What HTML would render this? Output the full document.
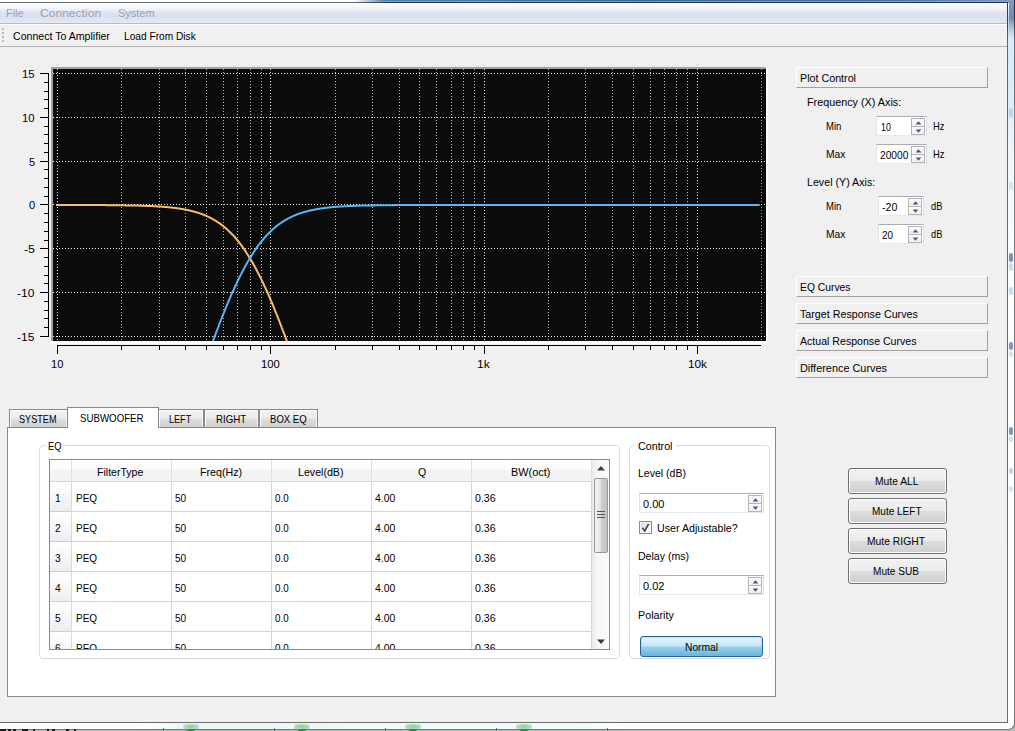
<!DOCTYPE html>
<html lang="en"><head><meta charset="utf-8"><title>EQ Control</title>
<style>
html,body{margin:0;padding:0}
body{width:1015px;height:731px;position:relative;overflow:hidden;background:#f0f0f0;font-family:"Liberation Sans", sans-serif;font-size:11px;color:#000}
.abs{position:absolute}
div{box-sizing:border-box}
.t{position:absolute;white-space:pre;transform-origin:0 0}
.hdr{position:absolute;left:796px;width:192px;height:21px;border-top:1px solid #fff;border-left:1px solid #fff;border-right:1px solid #a0a0a0;border-bottom:1px solid #a0a0a0;background:#f0f0f0}
.spin{position:absolute;background:#fff;border:1px solid #e3e9ef;border-top-color:#abadb3;border-left-color:#e2e3ea;border-right-color:#dbdfe6}
.sb{position:absolute;width:14px;border:1px solid #b4b4b4;background:linear-gradient(#fdfdfd,#f1f1f5)}
.tab{position:absolute;top:409px;height:18px;border:1px solid #8a8a8c;border-bottom:none;box-shadow:inset 1px 1px 0 #fbfbfb,inset -1px 0 0 #f4f4f4;background:linear-gradient(#f2f2f2 0%,#ececec 45%,#dedede 55%,#d0d0d0 100%)}
.gb{position:absolute;border:1px solid #d9dde1;border-radius:4px}
.btn{position:absolute;left:848px;width:99px;height:26px;border:1px solid #707070;border-radius:3px;box-shadow:inset 0 0 0 1px #fcfcfc;background:linear-gradient(#f2f2f2 0%,#ebebeb 48%,#dddddd 52%,#cfcfcf 100%)}
</style></head>
<body>
<div class="abs" style="left:0;top:0;width:1015px;height:1px;background:linear-gradient(90deg,#fff 0,#fff 355px,#4f7fb5 385px,#3a659a 640px,#4a73a3 900px,#7c9cc3 1015px)"></div>
<div class="abs" style="left:0;top:1px;width:1015px;height:1px;background:linear-gradient(90deg,#fff 0,#fff 352px,#79a6d4 380px,#6e9bca 640px,#7ba0ca 900px,#86a5ca 1015px)"></div>
<div class="abs" style="left:0;top:2px;width:1008px;height:1px;background:linear-gradient(90deg,#6a6a6a 0,#6a6a6a 355px,#1f3552 390px,#1f3552 100%)"></div>
<div class="abs" style="left:0;top:3px;width:1007px;height:20px;background:linear-gradient(#ffffff 0%,#f4f5fa 25%,#dfe2f0 50%,#dcdfee 70%,#e6e8f3 100%)"></div>
<div class="abs" style="left:0;top:23px;width:1007px;height:1px;background:#b8bbc6"></div>
<div class="abs" style="left:0;top:24px;width:1007px;height:1px;background:#fdfdfd"></div>
<div class="abs" style="left:0;top:25px;width:1007px;height:21px;background:#f1f1f1"></div>
<div class="abs" style="left:0;top:46px;width:1007px;height:1px;background:#b2b2b2"></div>
<div class="abs" style="left:2px;top:28px;width:2px;height:16px;background:repeating-linear-gradient(#b8b8b8 0,#b8b8b8 2px,transparent 2px,transparent 4px)"></div>
<div class="abs" style="left:1007px;top:2px;width:1px;height:721px;background:linear-gradient(#25364d 0,#3a4656 22px,#666 40px,#6b6b6b 100%)"></div>
<div class="abs" style="left:1008px;top:0;width:6px;height:730px;background:linear-gradient(#7d9cc2 0,#6a8bb6 18px,#a9c6df 28px,#d6ebf6 38px,#dceff8 110px,#eef6fa 150px,#fbfdfe 250px,#ffffff 400px)"></div>
<div class="abs" style="left:1008px;top:3px;width:1px;height:40px;background:linear-gradient(#ffffff,#ffffff00)"></div>
<div class="abs" style="left:1009px;top:108px;width:4px;height:10px;border-radius:2px;background:#b7d6ee"></div>
<div class="abs" style="left:1009px;top:182px;width:4px;height:8px;border-radius:2px;background:#d2e7f5"></div>
<div class="abs" style="left:1009px;top:253px;width:4px;height:9px;border-radius:2px;background:#7a90be"></div>
<div class="abs" style="left:1009px;top:263px;width:4px;height:8px;border-radius:2px;background:#c4def1"></div>
<div class="abs" style="left:1009px;top:287px;width:4px;height:8px;border-radius:2px;background:#c3ddf0"></div>
<div class="abs" style="left:1009px;top:342px;width:4px;height:8px;border-radius:2px;background:#8098c6"></div>
<div class="abs" style="left:1009px;top:351px;width:4px;height:6px;border-radius:2px;background:#cfe3f3"></div>
<div class="abs" style="left:1009px;top:427px;width:4px;height:8px;border-radius:2px;background:#8098c6"></div>
<div class="abs" style="left:1009px;top:436px;width:4px;height:6px;border-radius:2px;background:#cfe3f3"></div>
<div class="abs" style="left:1009px;top:468px;width:4px;height:6px;border-radius:2px;background:#bcd4ec"></div>
<div class="abs" style="left:1009px;top:486px;width:4px;height:6px;border-radius:2px;background:#d0e4f4"></div>
<div class="abs" style="left:1014px;top:0;width:1px;height:727px;background:linear-gradient(#1c2c44 0,#24364f 20px,#5d6b7c 40px,#777b80 120px,#7a7a7a 100%)"></div>
<div class="abs" style="left:0;top:722px;width:1008px;height:1px;background:#6b6b6b"></div>
<div class="abs" style="left:1008px;top:723px;width:7px;height:8px;background:#b4b4b4"></div>
<div class="abs" style="left:0;top:723px;width:1014px;height:7px;background:#fff;border-bottom-right-radius:6px"></div>
<div class="abs" style="left:-10px;top:715px;width:1025px;height:15px;border:1px solid #777;border-top:none;border-left:none;border-bottom-right-radius:7px"></div>
<div class="abs" style="left:0;top:730px;width:1015px;height:1px;background:#b9b9b9"></div>
<div class="abs" style="left:0px;top:729px;width:6px;height:2px;background:#1a1a1a"></div>
<div class="abs" style="left:8px;top:729px;width:3px;height:2px;background:#1a1a1a"></div>
<div class="abs" style="left:13px;top:729px;width:3px;height:2px;background:#1a1a1a"></div>
<div class="abs" style="left:22px;top:729px;width:6px;height:2px;background:#1a1a1a"></div>
<div class="abs" style="left:33px;top:729px;width:2px;height:2px;background:#1a1a1a"></div>
<div class="abs" style="left:47px;top:729px;width:2px;height:2px;background:#1a1a1a"></div>
<div class="abs" style="left:52px;top:729px;width:3px;height:2px;background:#1a1a1a"></div>
<div class="abs" style="left:66px;top:729px;width:3px;height:2px;background:#1a1a1a"></div>
<div class="abs" style="left:74px;top:729px;width:2px;height:2px;background:#1a1a1a"></div>
<div class="abs" style="left:140px;top:723px;width:480px;height:6px;background:linear-gradient(90deg,#ffffff00,#eafaf9 8%,#eefafa 92%,#ffffff00)"></div>
<div class="abs" style="left:183px;top:724px;width:16px;height:5px;background:radial-gradient(ellipse at 50% 60%,#8fd0a6 0,#a9dcbb 55%,#e4f6ec00 100%)"></div>
<div class="abs" style="left:185px;top:729px;width:12px;height:6px;border:2px solid #2c8a48;border-radius:6px 6px 0 0;border-bottom:none"></div>
<div class="abs" style="left:293.5px;top:724px;width:16px;height:5px;background:radial-gradient(ellipse at 50% 60%,#8fd0a6 0,#a9dcbb 55%,#e4f6ec00 100%)"></div>
<div class="abs" style="left:295.5px;top:729px;width:12px;height:6px;border:2px solid #2c8a48;border-radius:6px 6px 0 0;border-bottom:none"></div>
<div class="abs" style="left:405px;top:724px;width:16px;height:5px;background:radial-gradient(ellipse at 50% 60%,#8fd0a6 0,#a9dcbb 55%,#e4f6ec00 100%)"></div>
<div class="abs" style="left:407px;top:729px;width:12px;height:6px;border:2px solid #2c8a48;border-radius:6px 6px 0 0;border-bottom:none"></div>
<div class="abs" style="left:515.5px;top:724px;width:16px;height:5px;background:radial-gradient(ellipse at 50% 60%,#8fd0a6 0,#a9dcbb 55%,#e4f6ec00 100%)"></div>
<div class="abs" style="left:517.5px;top:729px;width:12px;height:6px;border:2px solid #2c8a48;border-radius:6px 6px 0 0;border-bottom:none"></div>
<div class="abs" style="left:163px;top:728px;width:1px;height:3px;background:#5a6a78"></div>
<div class="abs" style="left:274px;top:728px;width:1px;height:3px;background:#5a6a78"></div>
<div class="abs" style="left:385px;top:728px;width:1px;height:3px;background:#5a6a78"></div>
<div class="abs" style="left:496px;top:728px;width:1px;height:3px;background:#5a6a78"></div>
<div class="abs" style="left:607px;top:728px;width:1px;height:3px;background:#5a6a78"></div>
<svg class="abs" style="left:0;top:50px" width="790" height="330" viewBox="0 50 790 330" shape-rendering="crispEdges"><rect x="51" y="67" width="715" height="274" fill="#a2a2a2"/><rect x="766" y="67" width="2" height="277" fill="#ffffff"/><rect x="51" y="341" width="717" height="3" fill="#ffffff"/><rect x="53" y="69" width="713" height="272" fill="#0b0b0b"/><g stroke-width="1" stroke-dasharray="1 2"><line x1="57.5" y1="69" x2="57.5" y2="341" stroke="#e2e2e2"/><line x1="121.5" y1="69" x2="121.5" y2="341" stroke="#b8b8b8"/><line x1="159.5" y1="69" x2="159.5" y2="341" stroke="#b8b8b8"/><line x1="185.5" y1="69" x2="185.5" y2="341" stroke="#b8b8b8"/><line x1="206.5" y1="69" x2="206.5" y2="341" stroke="#b8b8b8"/><line x1="223.5" y1="69" x2="223.5" y2="341" stroke="#b8b8b8"/><line x1="237.5" y1="69" x2="237.5" y2="341" stroke="#b8b8b8"/><line x1="250.5" y1="69" x2="250.5" y2="341" stroke="#b8b8b8"/><line x1="261.5" y1="69" x2="261.5" y2="341" stroke="#b8b8b8"/><line x1="270.5" y1="69" x2="270.5" y2="341" stroke="#e2e2e2"/><line x1="335.5" y1="69" x2="335.5" y2="341" stroke="#b8b8b8"/><line x1="372.5" y1="69" x2="372.5" y2="341" stroke="#b8b8b8"/><line x1="399.5" y1="69" x2="399.5" y2="341" stroke="#b8b8b8"/><line x1="419.5" y1="69" x2="419.5" y2="341" stroke="#b8b8b8"/><line x1="436.5" y1="69" x2="436.5" y2="341" stroke="#b8b8b8"/><line x1="451.5" y1="69" x2="451.5" y2="341" stroke="#b8b8b8"/><line x1="463.5" y1="69" x2="463.5" y2="341" stroke="#b8b8b8"/><line x1="474.5" y1="69" x2="474.5" y2="341" stroke="#b8b8b8"/><line x1="484.5" y1="69" x2="484.5" y2="341" stroke="#e2e2e2"/><line x1="548.5" y1="69" x2="548.5" y2="341" stroke="#b8b8b8"/><line x1="585.5" y1="69" x2="585.5" y2="341" stroke="#b8b8b8"/><line x1="612.5" y1="69" x2="612.5" y2="341" stroke="#b8b8b8"/><line x1="633.5" y1="69" x2="633.5" y2="341" stroke="#b8b8b8"/><line x1="650.5" y1="69" x2="650.5" y2="341" stroke="#b8b8b8"/><line x1="664.5" y1="69" x2="664.5" y2="341" stroke="#b8b8b8"/><line x1="676.5" y1="69" x2="676.5" y2="341" stroke="#b8b8b8"/><line x1="687.5" y1="69" x2="687.5" y2="341" stroke="#b8b8b8"/><line x1="697.5" y1="69" x2="697.5" y2="341" stroke="#e2e2e2"/><line x1="761.5" y1="69" x2="761.5" y2="341" stroke="#8c8c8c"/><line x1="53" y1="73.5" x2="766" y2="73.5" stroke="#f2f2f2"/><line x1="53" y1="117.5" x2="766" y2="117.5" stroke="#f2f2f2"/><line x1="53" y1="161.5" x2="766" y2="161.5" stroke="#f2f2f2"/><line x1="53" y1="204.5" x2="766" y2="204.5" stroke="#f2f2f2"/><line x1="53" y1="248.5" x2="766" y2="248.5" stroke="#f2f2f2"/><line x1="53" y1="292.5" x2="766" y2="292.5" stroke="#f2f2f2"/><line x1="53" y1="336.5" x2="766" y2="336.5" stroke="#f2f2f2"/></g><clipPath id="cv"><rect x="53" y="69" width="713" height="272"/></clipPath><g clip-path="url(#cv)" fill="none" stroke-width="2" shape-rendering="auto" stroke-linejoin="round"><polyline stroke="#f6bd6c" points="56,205.0 57.0,205.0 57.5,205.0 58.0,205.0 58.5,205.0 59.0,205.0 59.5,205.0 60.0,205.0 60.5,205.0 61.0,205.0 61.5,205.0 62.0,205.0 62.5,205.0 63.0,205.0 63.5,205.0 64.0,205.0 64.5,205.0 65.0,205.0 65.6,205.0 66.1,205.0 66.6,205.0 67.1,205.0 67.6,205.0 68.1,205.0 68.6,205.0 69.1,205.0 69.6,205.0 70.1,205.0 70.6,205.0 71.1,205.0 71.6,205.0 72.1,205.0 72.6,205.0 73.1,205.0 73.6,205.0 74.1,205.0 74.6,205.0 75.1,205.0 75.6,205.0 76.1,205.0 76.6,205.0 77.1,205.0 77.6,205.0 78.1,205.0 78.6,205.0 79.1,205.0 79.6,205.0 80.1,205.1 80.6,205.1 81.1,205.1 81.6,205.1 82.2,205.1 82.7,205.1 83.2,205.1 83.7,205.1 84.2,205.1 84.7,205.1 85.2,205.1 85.7,205.1 86.2,205.1 86.7,205.1 87.2,205.1 87.7,205.1 88.2,205.1 88.7,205.1 89.2,205.1 89.7,205.1 90.2,205.1 90.7,205.1 91.2,205.1 91.7,205.1 92.2,205.1 92.7,205.1 93.2,205.1 93.7,205.1 94.2,205.1 94.7,205.1 95.2,205.1 95.7,205.1 96.2,205.1 96.7,205.1 97.2,205.1 97.7,205.1 98.2,205.1 98.7,205.1 99.3,205.1 99.8,205.1 100.3,205.1 100.8,205.1 101.3,205.1 101.8,205.1 102.3,205.1 102.8,205.1 103.3,205.1 103.8,205.1 104.3,205.1 104.8,205.1 105.3,205.1 105.8,205.2 106.3,205.2 106.8,205.2 107.3,205.2 107.8,205.2 108.3,205.2 108.8,205.2 109.3,205.2 109.8,205.2 110.3,205.2 110.8,205.2 111.3,205.2 111.8,205.2 112.3,205.2 112.8,205.2 113.3,205.2 113.8,205.2 114.3,205.2 114.8,205.2 115.3,205.2 115.9,205.2 116.4,205.2 116.9,205.2 117.4,205.3 117.9,205.3 118.4,205.3 118.9,205.3 119.4,205.3 119.9,205.3 120.4,205.3 120.9,205.3 121.4,205.3 121.9,205.3 122.4,205.3 122.9,205.3 123.4,205.3 123.9,205.3 124.4,205.3 124.9,205.3 125.4,205.4 125.9,205.4 126.4,205.4 126.9,205.4 127.4,205.4 127.9,205.4 128.4,205.4 128.9,205.4 129.4,205.4 129.9,205.4 130.4,205.4 130.9,205.5 131.4,205.5 131.9,205.5 132.5,205.5 133.0,205.5 133.5,205.5 134.0,205.5 134.5,205.5 135.0,205.5 135.5,205.5 136.0,205.6 136.5,205.6 137.0,205.6 137.5,205.6 138.0,205.6 138.5,205.6 139.0,205.6 139.5,205.7 140.0,205.7 140.5,205.7 141.0,205.7 141.5,205.7 142.0,205.7 142.5,205.7 143.0,205.8 143.5,205.8 144.0,205.8 144.5,205.8 145.0,205.8 145.5,205.8 146.0,205.9 146.5,205.9 147.0,205.9 147.5,205.9 148.0,205.9 148.5,206.0 149.1,206.0 149.6,206.0 150.1,206.0 150.6,206.0 151.1,206.1 151.6,206.1 152.1,206.1 152.6,206.1 153.1,206.2 153.6,206.2 154.1,206.2 154.6,206.2 155.1,206.3 155.6,206.3 156.1,206.3 156.6,206.4 157.1,206.4 157.6,206.4 158.1,206.4 158.6,206.5 159.1,206.5 159.6,206.5 160.1,206.6 160.6,206.6 161.1,206.6 161.6,206.7 162.1,206.7 162.6,206.8 163.1,206.8 163.6,206.8 164.1,206.9 164.6,206.9 165.1,207.0 165.6,207.0 166.2,207.0 166.7,207.1 167.2,207.1 167.7,207.2 168.2,207.2 168.7,207.3 169.2,207.3 169.7,207.4 170.2,207.4 170.7,207.5 171.2,207.5 171.7,207.6 172.2,207.6 172.7,207.7 173.2,207.8 173.7,207.8 174.2,207.9 174.7,207.9 175.2,208.0 175.7,208.1 176.2,208.1 176.7,208.2 177.2,208.3 177.7,208.3 178.2,208.4 178.7,208.5 179.2,208.6 179.7,208.6 180.2,208.7 180.7,208.8 181.2,208.9 181.7,209.0 182.2,209.0 182.8,209.1 183.3,209.2 183.8,209.3 184.3,209.4 184.8,209.5 185.3,209.6 185.8,209.7 186.3,209.8 186.8,209.9 187.3,210.0 187.8,210.1 188.3,210.2 188.8,210.3 189.3,210.4 189.8,210.5 190.3,210.7 190.8,210.8 191.3,210.9 191.8,211.0 192.3,211.1 192.8,211.3 193.3,211.4 193.8,211.5 194.3,211.7 194.8,211.8 195.3,212.0 195.8,212.1 196.3,212.3 196.8,212.4 197.3,212.6 197.8,212.7 198.3,212.9 198.8,213.1 199.4,213.2 199.9,213.4 200.4,213.6 200.9,213.7 201.4,213.9 201.9,214.1 202.4,214.3 202.9,214.5 203.4,214.7 203.9,214.9 204.4,215.1 204.9,215.3 205.4,215.5 205.9,215.7 206.4,215.9 206.9,216.2 207.4,216.4 207.9,216.6 208.4,216.9 208.9,217.1 209.4,217.3 209.9,217.6 210.4,217.8 210.9,218.1 211.4,218.4 211.9,218.6 212.4,218.9 212.9,219.2 213.4,219.5 213.9,219.8 214.4,220.1 214.9,220.4 215.4,220.7 215.9,221.0 216.5,221.3 217.0,221.6 217.5,221.9 218.0,222.3 218.5,222.6 219.0,222.9 219.5,223.3 220.0,223.7 220.5,224.0 221.0,224.4 221.5,224.8 222.0,225.1 222.5,225.5 223.0,225.9 223.5,226.3 224.0,226.7 224.5,227.1 225.0,227.6 225.5,228.0 226.0,228.4 226.5,228.9 227.0,229.3 227.5,229.8 228.0,230.2 228.5,230.7 229.0,231.2 229.5,231.7 230.0,232.2 230.5,232.7 231.0,233.2 231.5,233.7 232.0,234.2 232.5,234.7 233.1,235.3 233.6,235.8 234.1,236.4 234.6,236.9 235.1,237.5 235.6,238.1 236.1,238.7 236.6,239.3 237.1,239.9 237.6,240.5 238.1,241.1 238.6,241.7 239.1,242.4 239.6,243.0 240.1,243.7 240.6,244.3 241.1,245.0 241.6,245.7 242.1,246.4 242.6,247.1 243.1,247.8 243.6,248.5 244.1,249.2 244.6,250.0 245.1,250.7 245.6,251.4 246.1,252.2 246.6,253.0 247.1,253.8 247.6,254.5 248.1,255.3 248.6,256.1 249.1,257.0 249.7,257.8 250.2,258.6 250.7,259.4 251.2,260.3 251.7,261.2 252.2,262.0 252.7,262.9 253.2,263.8 253.7,264.7 254.2,265.6 254.7,266.5 255.2,267.4 255.7,268.3 256.2,269.3 256.7,270.2 257.2,271.2 257.7,272.1 258.2,273.1 258.7,274.1 259.2,275.1 259.7,276.1 260.2,277.1 260.7,278.1 261.2,279.1 261.7,280.2 262.2,281.2 262.7,282.3 263.2,283.3 263.7,284.4 264.2,285.5 264.7,286.5 265.2,287.6 265.7,288.7 266.3,289.8 266.8,291.0 267.3,292.1 267.8,293.2 268.3,294.3 268.8,295.5 269.3,296.6 269.8,297.8 270.3,299.0 270.8,300.2 271.3,301.3 271.8,302.5 272.3,303.7 272.8,304.9 273.3,306.1 273.8,307.4 274.3,308.6 274.8,309.8 275.3,311.1 275.8,312.3 276.3,313.6 276.8,314.8 277.3,316.1 277.8,317.4 278.3,318.6 278.8,319.9 279.3,321.2 279.8,322.5 280.3,323.8 280.8,325.1 281.3,326.4 281.8,327.8 282.3,329.1 282.8,330.4 283.4,331.8 283.9,333.1 284.4,334.4 284.9,335.8 285.4,337.2 285.9,338.5 286.4,339.9 286.9,341.3 287.4,342.7 287.9,344.0 288.4,345.4"/><polyline stroke="#5ab5f0" points="211.4,345.5 211.9,344.1 212.4,342.7 212.9,341.3 213.4,339.9 213.9,338.6 214.4,337.2 214.9,335.8 215.4,334.5 215.9,333.1 216.4,331.8 217.0,330.4 217.5,329.1 218.0,327.8 218.5,326.5 219.0,325.1 219.5,323.8 220.0,322.5 220.5,321.2 221.0,319.9 221.5,318.7 222.0,317.4 222.5,316.1 223.0,314.8 223.5,313.6 224.0,312.3 224.5,311.1 225.0,309.8 225.5,308.6 226.0,307.4 226.5,306.2 227.0,305.0 227.5,303.7 228.0,302.6 228.5,301.4 229.0,300.2 229.5,299.0 230.0,297.8 230.5,296.7 231.0,295.5 231.5,294.4 232.0,293.2 232.5,292.1 233.0,291.0 233.6,289.9 234.1,288.8 234.6,287.7 235.1,286.6 235.6,285.5 236.1,284.4 236.6,283.3 237.1,282.3 237.6,281.2 238.1,280.2 238.6,279.2 239.1,278.1 239.6,277.1 240.1,276.1 240.6,275.1 241.1,274.1 241.6,273.1 242.1,272.2 242.6,271.2 243.1,270.2 243.6,269.3 244.1,268.4 244.6,267.4 245.1,266.5 245.6,265.6 246.1,264.7 246.6,263.8 247.1,262.9 247.6,262.0 248.1,261.2 248.6,260.3 249.1,259.5 249.6,258.6 250.2,257.8 250.7,257.0 251.2,256.2 251.7,255.3 252.2,254.6 252.7,253.8 253.2,253.0 253.7,252.2 254.2,251.5 254.7,250.7 255.2,250.0 255.7,249.2 256.2,248.5 256.7,247.8 257.2,247.1 257.7,246.4 258.2,245.7 258.7,245.0 259.2,244.3 259.7,243.7 260.2,243.0 260.7,242.4 261.2,241.7 261.7,241.1 262.2,240.5 262.7,239.9 263.2,239.3 263.7,238.7 264.2,238.1 264.7,237.5 265.2,237.0 265.7,236.4 266.2,235.8 266.8,235.3 267.3,234.7 267.8,234.2 268.3,233.7 268.8,233.2 269.3,232.7 269.8,232.2 270.3,231.7 270.8,231.2 271.3,230.7 271.8,230.2 272.3,229.8 272.8,229.3 273.3,228.9 273.8,228.4 274.3,228.0 274.8,227.6 275.3,227.2 275.8,226.7 276.3,226.3 276.8,225.9 277.3,225.5 277.8,225.2 278.3,224.8 278.8,224.4 279.3,224.0 279.8,223.7 280.3,223.3 280.8,223.0 281.3,222.6 281.8,222.3 282.3,221.9 282.8,221.6 283.3,221.3 283.9,221.0 284.4,220.7 284.9,220.4 285.4,220.1 285.9,219.8 286.4,219.5 286.9,219.2 287.4,218.9 287.9,218.6 288.4,218.4 288.9,218.1 289.4,217.9 289.9,217.6 290.4,217.3 290.9,217.1 291.4,216.9 291.9,216.6 292.4,216.4 292.9,216.2 293.4,215.9 293.9,215.7 294.4,215.5 294.9,215.3 295.4,215.1 295.9,214.9 296.4,214.7 296.9,214.5 297.4,214.3 297.9,214.1 298.4,213.9 298.9,213.7 299.4,213.6 299.9,213.4 300.5,213.2 301.0,213.1 301.5,212.9 302.0,212.7 302.5,212.6 303.0,212.4 303.5,212.3 304.0,212.1 304.5,212.0 305.0,211.8 305.5,211.7 306.0,211.5 306.5,211.4 307.0,211.3 307.5,211.2 308.0,211.0 308.5,210.9 309.0,210.8 309.5,210.7 310.0,210.5 310.5,210.4 311.0,210.3 311.5,210.2 312.0,210.1 312.5,210.0 313.0,209.9 313.5,209.8 314.0,209.7 314.5,209.6 315.0,209.5 315.5,209.4 316.0,209.3 316.5,209.2 317.1,209.1 317.6,209.0 318.1,209.0 318.6,208.9 319.1,208.8 319.6,208.7 320.1,208.6 320.6,208.6 321.1,208.5 321.6,208.4 322.1,208.3 322.6,208.3 323.1,208.2 323.6,208.1 324.1,208.1 324.6,208.0 325.1,207.9 325.6,207.9 326.1,207.8 326.6,207.8 327.1,207.7 327.6,207.6 328.1,207.6 328.6,207.5 329.1,207.5 329.6,207.4 330.1,207.4 330.6,207.3 331.1,207.3 331.6,207.2 332.1,207.2 332.6,207.1 333.1,207.1 333.7,207.0 334.2,207.0 334.7,207.0 335.2,206.9 335.7,206.9 336.2,206.8 336.7,206.8 337.2,206.8 337.7,206.7 338.2,206.7 338.7,206.6 339.2,206.6 339.7,206.6 340.2,206.5 340.7,206.5 341.2,206.5 341.7,206.4 342.2,206.4 342.7,206.4 343.2,206.4 343.7,206.3 344.2,206.3 344.7,206.3 345.2,206.2 345.7,206.2 346.2,206.2 346.7,206.2 347.2,206.1 347.7,206.1 348.2,206.1 348.7,206.1 349.2,206.0 349.7,206.0 350.2,206.0 350.8,206.0 351.3,206.0 351.8,205.9 352.3,205.9 352.8,205.9 353.3,205.9 353.8,205.9 354.3,205.8 354.8,205.8 355.3,205.8 355.8,205.8 356.3,205.8 356.8,205.8 357.3,205.7 357.8,205.7 358.3,205.7 358.8,205.7 359.3,205.7 359.8,205.7 360.3,205.7 360.8,205.6 361.3,205.6 361.8,205.6 362.3,205.6 362.8,205.6 363.3,205.6 363.8,205.6 364.3,205.5 364.8,205.5 365.3,205.5 365.8,205.5 366.3,205.5 366.8,205.5 367.4,205.5 367.9,205.5 368.4,205.5 368.9,205.5 369.4,205.4 369.9,205.4 370.4,205.4 370.9,205.4 371.4,205.4 371.9,205.4 372.4,205.4 372.9,205.4 373.4,205.4 373.9,205.4 374.4,205.4 374.9,205.3 375.4,205.3 375.9,205.3 376.4,205.3 376.9,205.3 377.4,205.3 377.9,205.3 378.4,205.3 378.9,205.3 379.4,205.3 379.9,205.3 380.4,205.3 380.9,205.3 381.4,205.3 381.9,205.3 382.4,205.3 382.9,205.2 383.4,205.2 384.0,205.2 384.5,205.2 385.0,205.2 385.5,205.2 386.0,205.2 386.5,205.2 387.0,205.2 387.5,205.2 388.0,205.2 388.5,205.2 389.0,205.2 389.5,205.2 390.0,205.2 390.5,205.2 391.0,205.2 391.5,205.2 392.0,205.2 392.5,205.2 393.0,205.2 393.5,205.2 394.0,205.2 394.5,205.1 395.0,205.1 395.5,205.1 396.0,205.1 396.5,205.1 397.0,205.1 397.5,205.1 398.0,205.1 398.5,205.1 399.0,205.1 399.5,205.1 400.0,205.1 400.6,205.1 401.1,205.1 401.6,205.1 402.1,205.1 402.6,205.1 403.1,205.1 403.6,205.1 404.1,205.1 404.6,205.1 405.1,205.1 405.6,205.1 406.1,205.1 406.6,205.1 407.1,205.1 407.6,205.1 408.1,205.1 408.6,205.1 409.1,205.1 409.6,205.1 410.1,205.1 410.6,205.1 411.1,205.1 411.6,205.1 412.1,205.1 412.6,205.1 413.1,205.1 413.6,205.1 414.1,205.1 414.6,205.1 415.1,205.1 415.6,205.1 416.1,205.1 416.6,205.1 417.1,205.1 417.7,205.1 418.2,205.1 418.7,205.1 419.2,205.1 419.7,205.1 420.2,205.0 420.7,205.0 421.2,205.0 421.7,205.0 422.2,205.0 422.7,205.0 423.2,205.0 423.7,205.0 424.2,205.0 424.7,205.0 425.2,205.0 425.7,205.0 426.2,205.0 426.7,205.0 427.2,205.0 427.7,205.0 428.2,205.0 428.7,205.0 429.2,205.0 429.7,205.0 430.2,205.0 430.7,205.0 431.2,205.0 431.7,205.0 432.2,205.0 432.7,205.0 433.2,205.0 433.7,205.0 434.3,205.0 434.8,205.0 435.3,205.0 435.8,205.0 436.3,205.0 436.8,205.0 437.3,205.0 437.8,205.0 438.3,205.0 438.8,205.0 439.3,205.0 439.8,205.0 440.3,205.0 440.8,205.0 441.3,205.0 441.8,205.0 442.3,205.0 442.8,205.0 443.3,205.0 443.8,205.0 444.3,205.0 444.8,205.0 445.3,205.0 445.8,205.0 446.3,205.0 446.8,205.0 447.3,205.0 447.8,205.0 448.3,205.0 448.8,205.0 449.3,205.0 449.8,205.0 450.3,205.0 450.9,205.0 451.4,205.0 451.9,205.0 452.4,205.0 452.9,205.0 453.4,205.0 453.9,205.0 454.4,205.0 454.9,205.0 455.4,205.0 455.9,205.0 456.4,205.0 456.9,205.0 457.4,205.0 457.9,205.0 458.4,205.0 458.9,205.0 459.4,205.0 459.9,205.0 460.4,205.0 460.9,205.0 461.4,205.0 461.9,205.0 462.4,205.0 462.9,205.0 463.4,205.0 463.9,205.0 464.4,205.0 464.9,205.0 465.4,205.0 465.9,205.0 466.4,205.0 466.9,205.0 467.5,205.0 468.0,205.0 468.5,205.0 469.0,205.0 469.5,205.0 470.0,205.0 470.5,205.0 471.0,205.0 471.5,205.0 472.0,205.0 472.5,205.0 473.0,205.0 473.5,205.0 474.0,205.0 474.5,205.0 475.0,205.0 475.5,205.0 476.0,205.0 476.5,205.0 477.0,205.0 477.5,205.0 478.0,205.0 478.5,205.0 479.0,205.0 479.5,205.0 480.0,205.0 480.5,205.0 481.0,205.0 481.5,205.0 482.0,205.0 482.5,205.0 483.0,205.0 483.5,205.0 484.0,205.0 484.6,205.0 485.1,205.0 485.6,205.0 486.1,205.0 486.6,205.0 487.1,205.0 487.6,205.0 488.1,205.0 488.6,205.0 489.1,205.0 489.6,205.0 490.1,205.0 490.6,205.0 491.1,205.0 491.6,205.0 492.1,205.0 492.6,205.0 493.1,205.0 493.6,205.0 494.1,205.0 494.6,205.0 495.1,205.0 495.6,205.0 496.1,205.0 496.6,205.0 497.1,205.0 497.6,205.0 498.1,205.0 498.6,205.0 499.1,205.0 499.6,205.0 500.1,205.0 500.6,205.0 501.2,205.0 501.7,205.0 502.2,205.0 502.7,205.0 503.2,205.0 503.7,205.0 504.2,205.0 504.7,205.0 505.2,205.0 505.7,205.0 506.2,205.0 506.7,205.0 507.2,205.0 507.7,205.0 508.2,205.0 508.7,205.0 509.2,205.0 509.7,205.0 510.2,205.0 510.7,205.0 511.2,205.0 511.7,205.0 512.2,205.0 512.7,205.0 513.2,205.0 513.7,205.0 514.2,205.0 514.7,205.0 515.2,205.0 515.7,205.0 516.2,205.0 516.7,205.0 517.2,205.0 517.8,205.0 518.3,205.0 518.8,205.0 519.3,205.0 519.8,205.0 520.3,205.0 520.8,205.0 521.3,205.0 521.8,205.0 522.3,205.0 522.8,205.0 523.3,205.0 523.8,205.0 524.3,205.0 524.8,205.0 525.3,205.0 525.8,205.0 526.3,205.0 526.8,205.0 527.3,205.0 527.8,205.0 528.3,205.0 528.8,205.0 529.3,205.0 529.8,205.0 530.3,205.0 530.8,205.0 531.3,205.0 531.8,205.0 532.3,205.0 532.8,205.0 533.3,205.0 533.8,205.0 534.3,205.0 534.9,205.0 535.4,205.0 535.9,205.0 536.4,205.0 536.9,205.0 537.4,205.0 537.9,205.0 538.4,205.0 538.9,205.0 539.4,205.0 539.9,205.0 540.4,205.0 540.9,205.0 541.4,205.0 541.9,205.0 542.4,205.0 542.9,205.0 543.4,205.0 543.9,205.0 544.4,205.0 544.9,205.0 545.4,205.0 545.9,205.0 546.4,205.0 546.9,205.0 547.4,205.0 547.9,205.0 548.4,205.0 548.9,205.0 549.4,205.0 549.9,205.0 550.4,205.0 550.9,205.0 551.5,205.0 552.0,205.0 552.5,205.0 553.0,205.0 553.5,205.0 554.0,205.0 554.5,205.0 555.0,205.0 555.5,205.0 556.0,205.0 556.5,205.0 557.0,205.0 557.5,205.0 558.0,205.0 558.5,205.0 559.0,205.0 559.5,205.0 560.0,205.0 560.5,205.0 561.0,205.0 561.5,205.0 562.0,205.0 562.5,205.0 563.0,205.0 563.5,205.0 564.0,205.0 564.5,205.0 565.0,205.0 565.5,205.0 566.0,205.0 566.5,205.0 567.0,205.0 567.5,205.0 568.1,205.0 568.6,205.0 569.1,205.0 569.6,205.0 570.1,205.0 570.6,205.0 571.1,205.0 571.6,205.0 572.1,205.0 572.6,205.0 573.1,205.0 573.6,205.0 574.1,205.0 574.6,205.0 575.1,205.0 575.6,205.0 576.1,205.0 576.6,205.0 577.1,205.0 577.6,205.0 578.1,205.0 578.6,205.0 579.1,205.0 579.6,205.0 580.1,205.0 580.6,205.0 581.1,205.0 581.6,205.0 582.1,205.0 582.6,205.0 583.1,205.0 583.6,205.0 584.1,205.0 584.7,205.0 585.2,205.0 585.7,205.0 586.2,205.0 586.7,205.0 587.2,205.0 587.7,205.0 588.2,205.0 588.7,205.0 589.2,205.0 589.7,205.0 590.2,205.0 590.7,205.0 591.2,205.0 591.7,205.0 592.2,205.0 592.7,205.0 593.2,205.0 593.7,205.0 594.2,205.0 594.7,205.0 595.2,205.0 595.7,205.0 596.2,205.0 596.7,205.0 597.2,205.0 597.7,205.0 598.2,205.0 598.7,205.0 599.2,205.0 599.7,205.0 600.2,205.0 600.7,205.0 601.2,205.0 601.8,205.0 602.3,205.0 602.8,205.0 603.3,205.0 603.8,205.0 604.3,205.0 604.8,205.0 605.3,205.0 605.8,205.0 606.3,205.0 606.8,205.0 607.3,205.0 607.8,205.0 608.3,205.0 608.8,205.0 609.3,205.0 609.8,205.0 610.3,205.0 610.8,205.0 611.3,205.0 611.8,205.0 612.3,205.0 612.8,205.0 613.3,205.0 613.8,205.0 614.3,205.0 614.8,205.0 615.3,205.0 615.8,205.0 616.3,205.0 616.8,205.0 617.3,205.0 617.8,205.0 618.4,205.0 618.9,205.0 619.4,205.0 619.9,205.0 620.4,205.0 620.9,205.0 621.4,205.0 621.9,205.0 622.4,205.0 622.9,205.0 623.4,205.0 623.9,205.0 624.4,205.0 624.9,205.0 625.4,205.0 625.9,205.0 626.4,205.0 626.9,205.0 627.4,205.0 627.9,205.0 628.4,205.0 628.9,205.0 629.4,205.0 629.9,205.0 630.4,205.0 630.9,205.0 631.4,205.0 631.9,205.0 632.4,205.0 632.9,205.0 633.4,205.0 633.9,205.0 634.4,205.0 635.0,205.0 635.5,205.0 636.0,205.0 636.5,205.0 637.0,205.0 637.5,205.0 638.0,205.0 638.5,205.0 639.0,205.0 639.5,205.0 640.0,205.0 640.5,205.0 641.0,205.0 641.5,205.0 642.0,205.0 642.5,205.0 643.0,205.0 643.5,205.0 644.0,205.0 644.5,205.0 645.0,205.0 645.5,205.0 646.0,205.0 646.5,205.0 647.0,205.0 647.5,205.0 648.0,205.0 648.5,205.0 649.0,205.0 649.5,205.0 650.0,205.0 650.5,205.0 651.0,205.0 651.6,205.0 652.1,205.0 652.6,205.0 653.1,205.0 653.6,205.0 654.1,205.0 654.6,205.0 655.1,205.0 655.6,205.0 656.1,205.0 656.6,205.0 657.1,205.0 657.6,205.0 658.1,205.0 658.6,205.0 659.1,205.0 659.6,205.0 660.1,205.0 660.6,205.0 661.1,205.0 661.6,205.0 662.1,205.0 662.6,205.0 663.1,205.0 663.6,205.0 664.1,205.0 664.6,205.0 665.1,205.0 665.6,205.0 666.1,205.0 666.6,205.0 667.1,205.0 667.6,205.0 668.1,205.0 668.7,205.0 669.2,205.0 669.7,205.0 670.2,205.0 670.7,205.0 671.2,205.0 671.7,205.0 672.2,205.0 672.7,205.0 673.2,205.0 673.7,205.0 674.2,205.0 674.7,205.0 675.2,205.0 675.7,205.0 676.2,205.0 676.7,205.0 677.2,205.0 677.7,205.0 678.2,205.0 678.7,205.0 679.2,205.0 679.7,205.0 680.2,205.0 680.7,205.0 681.2,205.0 681.7,205.0 682.2,205.0 682.7,205.0 683.2,205.0 683.7,205.0 684.2,205.0 684.7,205.0 685.3,205.0 685.8,205.0 686.3,205.0 686.8,205.0 687.3,205.0 687.8,205.0 688.3,205.0 688.8,205.0 689.3,205.0 689.8,205.0 690.3,205.0 690.8,205.0 691.3,205.0 691.8,205.0 692.3,205.0 692.8,205.0 693.3,205.0 693.8,205.0 694.3,205.0 694.8,205.0 695.3,205.0 695.8,205.0 696.3,205.0 696.8,205.0 697.3,205.0 697.8,205.0 698.3,205.0 698.8,205.0 699.3,205.0 699.8,205.0 700.3,205.0 700.8,205.0 701.3,205.0 701.9,205.0 702.4,205.0 702.9,205.0 703.4,205.0 703.9,205.0 704.4,205.0 704.9,205.0 705.4,205.0 705.9,205.0 706.4,205.0 706.9,205.0 707.4,205.0 707.9,205.0 708.4,205.0 708.9,205.0 709.4,205.0 709.9,205.0 710.4,205.0 710.9,205.0 711.4,205.0 711.9,205.0 712.4,205.0 712.9,205.0 713.4,205.0 713.9,205.0 714.4,205.0 714.9,205.0 715.4,205.0 715.9,205.0 716.4,205.0 716.9,205.0 717.4,205.0 717.9,205.0 718.5,205.0 719.0,205.0 719.5,205.0 720.0,205.0 720.5,205.0 721.0,205.0 721.5,205.0 722.0,205.0 722.5,205.0 723.0,205.0 723.5,205.0 724.0,205.0 724.5,205.0 725.0,205.0 725.5,205.0 726.0,205.0 726.5,205.0 727.0,205.0 727.5,205.0 728.0,205.0 728.5,205.0 729.0,205.0 729.5,205.0 730.0,205.0 730.5,205.0 731.0,205.0 731.5,205.0 732.0,205.0 732.5,205.0 733.0,205.0 733.5,205.0 734.0,205.0 734.5,205.0 735.0,205.0 735.6,205.0 736.1,205.0 736.6,205.0 737.1,205.0 737.6,205.0 738.1,205.0 738.6,205.0 739.1,205.0 739.6,205.0 740.1,205.0 740.6,205.0 741.1,205.0 741.6,205.0 742.1,205.0 742.6,205.0 743.1,205.0 743.6,205.0 744.1,205.0 744.6,205.0 745.1,205.0 745.6,205.0 746.1,205.0 746.6,205.0 747.1,205.0 747.6,205.0 748.1,205.0 748.6,205.0 749.1,205.0 749.6,205.0 750.1,205.0 750.6,205.0 751.1,205.0 751.6,205.0 752.2,205.0 752.7,205.0 753.2,205.0 753.7,205.0 754.2,205.0 754.7,205.0 755.2,205.0 755.7,205.0 756.2,205.0 756.7,205.0 757.2,205.0 757.7,205.0 758.2,205.0 758.7,205.0 759.2,205.0 759.7,205.0"/></g><g stroke="#000" stroke-width="1"><line x1="48.5" y1="73" x2="48.5" y2="337"/><line x1="40" y1="73.5" x2="49" y2="73.5"/><line x1="44" y1="82.5" x2="49" y2="82.5"/><line x1="44" y1="91.5" x2="49" y2="91.5"/><line x1="44" y1="99.5" x2="49" y2="99.5"/><line x1="44" y1="108.5" x2="49" y2="108.5"/><line x1="40" y1="117.5" x2="49" y2="117.5"/><line x1="44" y1="126.5" x2="49" y2="126.5"/><line x1="44" y1="134.5" x2="49" y2="134.5"/><line x1="44" y1="143.5" x2="49" y2="143.5"/><line x1="44" y1="152.5" x2="49" y2="152.5"/><line x1="40" y1="161.5" x2="49" y2="161.5"/><line x1="44" y1="169.5" x2="49" y2="169.5"/><line x1="44" y1="178.5" x2="49" y2="178.5"/><line x1="44" y1="187.5" x2="49" y2="187.5"/><line x1="44" y1="196.5" x2="49" y2="196.5"/><line x1="40" y1="204.5" x2="49" y2="204.5"/><line x1="44" y1="213.5" x2="49" y2="213.5"/><line x1="44" y1="222.5" x2="49" y2="222.5"/><line x1="44" y1="231.5" x2="49" y2="231.5"/><line x1="44" y1="240.5" x2="49" y2="240.5"/><line x1="40" y1="248.5" x2="49" y2="248.5"/><line x1="44" y1="257.5" x2="49" y2="257.5"/><line x1="44" y1="266.5" x2="49" y2="266.5"/><line x1="44" y1="275.5" x2="49" y2="275.5"/><line x1="44" y1="283.5" x2="49" y2="283.5"/><line x1="40" y1="292.5" x2="49" y2="292.5"/><line x1="44" y1="301.5" x2="49" y2="301.5"/><line x1="44" y1="310.5" x2="49" y2="310.5"/><line x1="44" y1="318.5" x2="49" y2="318.5"/><line x1="44" y1="327.5" x2="49" y2="327.5"/><line x1="40" y1="336.5" x2="49" y2="336.5"/><line x1="57" y1="345.5" x2="761" y2="345.5"/><line x1="57.5" y1="345" x2="57.5" y2="354"/><line x1="121.5" y1="345" x2="121.5" y2="350"/><line x1="159.5" y1="345" x2="159.5" y2="350"/><line x1="185.5" y1="345" x2="185.5" y2="350"/><line x1="206.5" y1="345" x2="206.5" y2="350"/><line x1="223.5" y1="345" x2="223.5" y2="350"/><line x1="237.5" y1="345" x2="237.5" y2="350"/><line x1="250.5" y1="345" x2="250.5" y2="350"/><line x1="261.5" y1="345" x2="261.5" y2="350"/><line x1="270.5" y1="345" x2="270.5" y2="354"/><line x1="335.5" y1="345" x2="335.5" y2="350"/><line x1="372.5" y1="345" x2="372.5" y2="350"/><line x1="399.5" y1="345" x2="399.5" y2="350"/><line x1="419.5" y1="345" x2="419.5" y2="350"/><line x1="436.5" y1="345" x2="436.5" y2="350"/><line x1="451.5" y1="345" x2="451.5" y2="350"/><line x1="463.5" y1="345" x2="463.5" y2="350"/><line x1="474.5" y1="345" x2="474.5" y2="350"/><line x1="484.5" y1="345" x2="484.5" y2="354"/><line x1="548.5" y1="345" x2="548.5" y2="350"/><line x1="585.5" y1="345" x2="585.5" y2="350"/><line x1="612.5" y1="345" x2="612.5" y2="350"/><line x1="633.5" y1="345" x2="633.5" y2="350"/><line x1="650.5" y1="345" x2="650.5" y2="350"/><line x1="664.5" y1="345" x2="664.5" y2="350"/><line x1="676.5" y1="345" x2="676.5" y2="350"/><line x1="687.5" y1="345" x2="687.5" y2="350"/><line x1="697.5" y1="345" x2="697.5" y2="354"/></g></svg>
<div class="hdr" style="top:67px"></div>
<div class="hdr" style="top:276px"></div>
<div class="hdr" style="top:303px"></div>
<div class="hdr" style="top:330px"></div>
<div class="hdr" style="top:357px"></div>
<div class="spin" style="left:876px;top:116px;width:51px;height:20px"><div class="sb" style="left:34px;top:1px;height:9px"><svg class="abs" style="left:2.5px;top:2px" width="7" height="4" viewBox="0 0 7 4"><path d="M0.6 3.6 L3.5 0.2 L6.4 3.6 Z" fill="#525782"/></svg></div><div class="sb" style="left:34px;top:9px;height:9px"><svg class="abs" style="left:2.5px;top:1.5px" width="7" height="4" viewBox="0 0 7 4"><path d="M0.6 0.4 L3.5 3.8 L6.4 0.4 Z" fill="#525782"/></svg></div></div>
<div class="spin" style="left:876px;top:144px;width:51px;height:20px"><div class="sb" style="left:34px;top:1px;height:9px"><svg class="abs" style="left:2.5px;top:2px" width="7" height="4" viewBox="0 0 7 4"><path d="M0.6 3.6 L3.5 0.2 L6.4 3.6 Z" fill="#525782"/></svg></div><div class="sb" style="left:34px;top:9px;height:9px"><svg class="abs" style="left:2.5px;top:1.5px" width="7" height="4" viewBox="0 0 7 4"><path d="M0.6 0.4 L3.5 3.8 L6.4 0.4 Z" fill="#525782"/></svg></div></div>
<div class="spin" style="left:878px;top:196px;width:46px;height:20px"><div class="sb" style="left:29px;top:1px;height:9px"><svg class="abs" style="left:2.5px;top:2px" width="7" height="4" viewBox="0 0 7 4"><path d="M0.6 3.6 L3.5 0.2 L6.4 3.6 Z" fill="#525782"/></svg></div><div class="sb" style="left:29px;top:9px;height:9px"><svg class="abs" style="left:2.5px;top:1.5px" width="7" height="4" viewBox="0 0 7 4"><path d="M0.6 0.4 L3.5 3.8 L6.4 0.4 Z" fill="#525782"/></svg></div></div>
<div class="spin" style="left:878px;top:224px;width:46px;height:20px"><div class="sb" style="left:29px;top:1px;height:9px"><svg class="abs" style="left:2.5px;top:2px" width="7" height="4" viewBox="0 0 7 4"><path d="M0.6 3.6 L3.5 0.2 L6.4 3.6 Z" fill="#525782"/></svg></div><div class="sb" style="left:29px;top:9px;height:9px"><svg class="abs" style="left:2.5px;top:1.5px" width="7" height="4" viewBox="0 0 7 4"><path d="M0.6 0.4 L3.5 3.8 L6.4 0.4 Z" fill="#525782"/></svg></div></div>
<div class="abs" style="left:7px;top:427px;width:769px;height:270px;background:#fff;border:1px solid #8a8a8c"></div>
<div class="tab" style="left:9px;width:59px"></div>
<div class="tab" style="left:158px;width:46px"></div>
<div class="tab" style="left:204px;width:55px"></div>
<div class="tab" style="left:259px;width:59px"></div>
<div class="abs" style="left:67px;top:407px;width:92px;height:21px;background:#fff;border:1px solid #8a8a8c;border-bottom:none"></div>
<div class="gb" style="left:39px;top:445px;width:581px;height:214px"></div>
<div class="abs" style="left:45px;top:440px;width:19px;height:12px;background:#fff"></div>
<div class="gb" style="left:629px;top:445px;width:141px;height:214px"></div>
<div class="abs" style="left:635px;top:440px;width:41px;height:12px;background:#fff"></div>
<div class="abs" style="left:49px;top:459px;width:561px;height:191px;background:#fff;border:1px solid #8a8a8a;overflow:hidden"><div class="abs" style="left:0;top:0;width:542px;height:22px;background:linear-gradient(#ffffff 0,#fbfbfc 45%,#f3f4f6 50%,#f1f2f4 100%);border-bottom:1px solid #d5d5d5"></div><div class="abs" style="left:21px;top:0;width:1px;height:22px;background:#dedfe1"></div><div class="abs" style="left:121px;top:0;width:1px;height:22px;background:#dedfe1"></div><div class="abs" style="left:221px;top:0;width:1px;height:22px;background:#dedfe1"></div><div class="abs" style="left:321px;top:0;width:1px;height:22px;background:#dedfe1"></div><div class="abs" style="left:421px;top:0;width:1px;height:22px;background:#dedfe1"></div><div class="abs" style="left:541px;top:0;width:1px;height:22px;background:#dedfe1"></div><div class="abs" style="left:0;top:22px;width:22px;height:30px;background:linear-gradient(#ffffff 0,#f9f9fa 40%,#eeeef1 100%);border-right:1px solid #d9d9db;border-bottom:1px solid #cfcfd1"></div><div class="abs" style="left:22px;top:51px;width:520px;height:1px;background:#d6d6d6"></div><div class="abs" style="left:0;top:52px;width:22px;height:30px;background:linear-gradient(#ffffff 0,#f9f9fa 40%,#eeeef1 100%);border-right:1px solid #d9d9db;border-bottom:1px solid #cfcfd1"></div><div class="abs" style="left:22px;top:81px;width:520px;height:1px;background:#d6d6d6"></div><div class="abs" style="left:0;top:82px;width:22px;height:30px;background:linear-gradient(#ffffff 0,#f9f9fa 40%,#eeeef1 100%);border-right:1px solid #d9d9db;border-bottom:1px solid #cfcfd1"></div><div class="abs" style="left:22px;top:111px;width:520px;height:1px;background:#d6d6d6"></div><div class="abs" style="left:0;top:112px;width:22px;height:30px;background:linear-gradient(#ffffff 0,#f9f9fa 40%,#eeeef1 100%);border-right:1px solid #d9d9db;border-bottom:1px solid #cfcfd1"></div><div class="abs" style="left:22px;top:141px;width:520px;height:1px;background:#d6d6d6"></div><div class="abs" style="left:0;top:142px;width:22px;height:30px;background:linear-gradient(#ffffff 0,#f9f9fa 40%,#eeeef1 100%);border-right:1px solid #d9d9db;border-bottom:1px solid #cfcfd1"></div><div class="abs" style="left:22px;top:171px;width:520px;height:1px;background:#d6d6d6"></div><div class="abs" style="left:0;top:172px;width:22px;height:30px;background:linear-gradient(#ffffff 0,#f9f9fa 40%,#eeeef1 100%);border-right:1px solid #d9d9db;border-bottom:1px solid #cfcfd1"></div><div class="abs" style="left:22px;top:201px;width:520px;height:1px;background:#d6d6d6"></div><div class="abs" style="left:0;top:202px;width:22px;height:30px;background:linear-gradient(#ffffff 0,#f9f9fa 40%,#eeeef1 100%);border-right:1px solid #d9d9db;border-bottom:1px solid #cfcfd1"></div><div class="abs" style="left:22px;top:231px;width:520px;height:1px;background:#d6d6d6"></div><div class="abs" style="left:121px;top:22px;width:1px;height:170px;background:#d8d8d8"></div><div class="abs" style="left:221px;top:22px;width:1px;height:170px;background:#d8d8d8"></div><div class="abs" style="left:321px;top:22px;width:1px;height:170px;background:#d8d8d8"></div><div class="abs" style="left:421px;top:22px;width:1px;height:170px;background:#d8d8d8"></div><div class="abs" style="left:541px;top:22px;width:1px;height:170px;background:#d8d8d8"></div><div class="abs" style="left:542px;top:0;width:17px;height:189px;background:linear-gradient(90deg,#e9e9e9,#f6f6f6 30%,#fafafa)"></div><div class="abs" style="left:544px;top:18px;width:14px;height:75px;border:1px solid #989898;border-radius:2px;background:linear-gradient(90deg,#f2f2f2 0,#e4e4e4 45%,#cfcfcf 50%,#c2c2c2 100%)"></div><div class="abs" style="left:547px;top:51px;width:8px;height:1px;background:#555"></div><div class="abs" style="left:547px;top:54px;width:8px;height:1px;background:#555"></div><div class="abs" style="left:547px;top:57px;width:8px;height:1px;background:#555"></div><svg class="abs" style="left:547px;top:6px" width="8" height="5" viewBox="0 0 8 5"><path d="M0 4.5 L4 0 L8 4.5 Z" fill="#3a3a3a"/></svg><svg class="abs" style="left:547px;top:179px" width="8" height="5" viewBox="0 0 8 5"><path d="M0 0.5 L4 5 L8 0.5 Z" fill="#3a3a3a"/></svg></div>
<div class="spin" style="left:639px;top:493px;width:125px;height:20px"><div class="sb" style="left:108px;top:1px;height:9px"><svg class="abs" style="left:2.5px;top:2px" width="7" height="4" viewBox="0 0 7 4"><path d="M0.6 3.6 L3.5 0.2 L6.4 3.6 Z" fill="#525782"/></svg></div><div class="sb" style="left:108px;top:9px;height:9px"><svg class="abs" style="left:2.5px;top:1.5px" width="7" height="4" viewBox="0 0 7 4"><path d="M0.6 0.4 L3.5 3.8 L6.4 0.4 Z" fill="#525782"/></svg></div></div>
<div class="spin" style="left:639px;top:575px;width:125px;height:20px"><div class="sb" style="left:108px;top:1px;height:9px"><svg class="abs" style="left:2.5px;top:2px" width="7" height="4" viewBox="0 0 7 4"><path d="M0.6 3.6 L3.5 0.2 L6.4 3.6 Z" fill="#525782"/></svg></div><div class="sb" style="left:108px;top:9px;height:9px"><svg class="abs" style="left:2.5px;top:1.5px" width="7" height="4" viewBox="0 0 7 4"><path d="M0.6 0.4 L3.5 3.8 L6.4 0.4 Z" fill="#525782"/></svg></div></div>
<div class="abs" style="left:639px;top:521px;width:13px;height:13px;border:1px solid #8b8f8f;background:linear-gradient(135deg,#d4d7de 0%,#eceef2 50%,#ffffff 100%);box-shadow:inset 0 0 0 1px #f6f6f6"><svg class="abs" style="left:1px;top:1px" width="9" height="9" viewBox="0 0 9 9"><path d="M1.4 4.8 L3.7 8 L7.6 0.8" fill="none" stroke="#3d4672" stroke-width="1.7"/></svg></div>
<div class="abs" style="left:640px;top:636px;width:123px;height:21px;border:1px solid #2c628b;border-radius:3px;box-shadow:inset 0 0 0 1px #48d8fb55;background:linear-gradient(#e5f4fc 0%,#c4e5f6 48%,#98d1ef 52%,#68b3db 100%)"></div>
<div class="btn" style="top:468px"></div>
<div class="btn" style="top:498px"></div>
<div class="btn" style="top:528px"></div>
<div class="btn" style="top:558px"></div>
<div class="abs" style="left:50px;top:460px;width:559px;height:189px;overflow:hidden"><div class="t" style="left:5.20px;top:31.19px;font-size:11px;line-height:14px;color:#000;transform:scaleX(0.9300);">1</div>
<div class="t" style="left:25.50px;top:31.19px;font-size:11px;line-height:14px;color:#000;transform:scaleX(0.9081);">PEQ</div>
<div class="t" style="left:125.00px;top:31.19px;font-size:11px;line-height:14px;color:#000;transform:scaleX(0.9143);">50</div>
<div class="t" style="left:225.00px;top:31.19px;font-size:11px;line-height:14px;color:#000;transform:scaleX(0.8891);">0.0</div>
<div class="t" style="left:325.00px;top:31.19px;font-size:11px;line-height:14px;color:#000;transform:scaleX(0.9430);">4.00</div>
<div class="t" style="left:425.00px;top:31.19px;font-size:11px;line-height:14px;color:#000;transform:scaleX(0.9663);">0.36</div>
<div class="t" style="left:5.20px;top:61.19px;font-size:11px;line-height:14px;color:#000;transform:scaleX(0.9300);">2</div>
<div class="t" style="left:25.50px;top:61.19px;font-size:11px;line-height:14px;color:#000;transform:scaleX(0.9081);">PEQ</div>
<div class="t" style="left:125.00px;top:61.19px;font-size:11px;line-height:14px;color:#000;transform:scaleX(0.9143);">50</div>
<div class="t" style="left:225.00px;top:61.19px;font-size:11px;line-height:14px;color:#000;transform:scaleX(0.8891);">0.0</div>
<div class="t" style="left:325.00px;top:61.19px;font-size:11px;line-height:14px;color:#000;transform:scaleX(0.9430);">4.00</div>
<div class="t" style="left:425.00px;top:61.19px;font-size:11px;line-height:14px;color:#000;transform:scaleX(0.9663);">0.36</div>
<div class="t" style="left:5.20px;top:91.19px;font-size:11px;line-height:14px;color:#000;transform:scaleX(0.9300);">3</div>
<div class="t" style="left:25.50px;top:91.19px;font-size:11px;line-height:14px;color:#000;transform:scaleX(0.9081);">PEQ</div>
<div class="t" style="left:125.00px;top:91.19px;font-size:11px;line-height:14px;color:#000;transform:scaleX(0.9143);">50</div>
<div class="t" style="left:225.00px;top:91.19px;font-size:11px;line-height:14px;color:#000;transform:scaleX(0.8891);">0.0</div>
<div class="t" style="left:325.00px;top:91.19px;font-size:11px;line-height:14px;color:#000;transform:scaleX(0.9430);">4.00</div>
<div class="t" style="left:425.00px;top:91.19px;font-size:11px;line-height:14px;color:#000;transform:scaleX(0.9663);">0.36</div>
<div class="t" style="left:5.20px;top:121.19px;font-size:11px;line-height:14px;color:#000;transform:scaleX(0.9300);">4</div>
<div class="t" style="left:25.50px;top:121.19px;font-size:11px;line-height:14px;color:#000;transform:scaleX(0.9081);">PEQ</div>
<div class="t" style="left:125.00px;top:121.19px;font-size:11px;line-height:14px;color:#000;transform:scaleX(0.9143);">50</div>
<div class="t" style="left:225.00px;top:121.19px;font-size:11px;line-height:14px;color:#000;transform:scaleX(0.8891);">0.0</div>
<div class="t" style="left:325.00px;top:121.19px;font-size:11px;line-height:14px;color:#000;transform:scaleX(0.9430);">4.00</div>
<div class="t" style="left:425.00px;top:121.19px;font-size:11px;line-height:14px;color:#000;transform:scaleX(0.9663);">0.36</div>
<div class="t" style="left:5.20px;top:151.19px;font-size:11px;line-height:14px;color:#000;transform:scaleX(0.9300);">5</div>
<div class="t" style="left:25.50px;top:151.19px;font-size:11px;line-height:14px;color:#000;transform:scaleX(0.9081);">PEQ</div>
<div class="t" style="left:125.00px;top:151.19px;font-size:11px;line-height:14px;color:#000;transform:scaleX(0.9143);">50</div>
<div class="t" style="left:225.00px;top:151.19px;font-size:11px;line-height:14px;color:#000;transform:scaleX(0.8891);">0.0</div>
<div class="t" style="left:325.00px;top:151.19px;font-size:11px;line-height:14px;color:#000;transform:scaleX(0.9430);">4.00</div>
<div class="t" style="left:425.00px;top:151.19px;font-size:11px;line-height:14px;color:#000;transform:scaleX(0.9663);">0.36</div>
<div class="t" style="left:5.20px;top:181.19px;font-size:11px;line-height:14px;color:#000;transform:scaleX(0.9300);">6</div>
<div class="t" style="left:25.50px;top:181.19px;font-size:11px;line-height:14px;color:#000;transform:scaleX(0.9081);">PEQ</div>
<div class="t" style="left:125.00px;top:181.19px;font-size:11px;line-height:14px;color:#000;transform:scaleX(0.9143);">50</div>
<div class="t" style="left:225.00px;top:181.19px;font-size:11px;line-height:14px;color:#000;transform:scaleX(0.8891);">0.0</div>
<div class="t" style="left:325.00px;top:181.19px;font-size:11px;line-height:14px;color:#000;transform:scaleX(0.9430);">4.00</div>
<div class="t" style="left:425.00px;top:181.19px;font-size:11px;line-height:14px;color:#000;transform:scaleX(0.9663);">0.36</div></div>
<div class="t" style="left:5.60px;top:5.69px;font-size:11px;line-height:14px;color:#9c9fb2;transform:scaleX(0.9924);">File</div>
<div class="t" style="left:39.70px;top:5.69px;font-size:11px;line-height:14px;color:#9c9fb2;transform:scaleX(1.0978);">Connection</div>
<div class="t" style="left:117.50px;top:5.69px;font-size:11px;line-height:14px;color:#9c9fb2;transform:scaleX(0.9976);">System</div>
<div class="t" style="left:12.80px;top:29.19px;font-size:11px;line-height:14px;color:#000;transform:scaleX(0.9624);">Connect To Amplifier</div>
<div class="t" style="left:123.70px;top:29.19px;font-size:11px;line-height:14px;color:#000;transform:scaleX(0.9248);">Load From Disk</div>
<div class="t" style="left:22.20px;top:66.88px;font-size:11.3px;line-height:14px;color:#000;transform:scaleX(1.0017);">15</div>
<div class="t" style="left:22.20px;top:110.88px;font-size:11.3px;line-height:14px;color:#000;transform:scaleX(1.0017);">10</div>
<div class="t" style="left:28.60px;top:154.88px;font-size:11.3px;line-height:14px;color:#000;transform:scaleX(0.9846);">5</div>
<div class="t" style="left:28.60px;top:197.88px;font-size:11.3px;line-height:14px;color:#000;transform:scaleX(0.9846);">0</div>
<div class="t" style="left:23.80px;top:241.88px;font-size:11.3px;line-height:14px;color:#000;transform:scaleX(1.0949);">-5</div>
<div class="t" style="left:17.40px;top:285.88px;font-size:11.3px;line-height:14px;color:#000;transform:scaleX(1.0656);">-10</div>
<div class="t" style="left:17.40px;top:329.88px;font-size:11.3px;line-height:14px;color:#000;transform:scaleX(1.0656);">-15</div>
<div class="t" style="left:50.90px;top:356.68px;font-size:11.3px;line-height:14px;color:#000;transform:scaleX(0.9858);">10</div>
<div class="t" style="left:261.03px;top:356.68px;font-size:11.3px;line-height:14px;color:#000;transform:scaleX(0.9969);">100</div>
<div class="t" style="left:477.36px;top:356.68px;font-size:11.3px;line-height:14px;color:#000;transform:scaleX(1.0723);">1k</div>
<div class="t" style="left:687.59px;top:356.68px;font-size:11.3px;line-height:14px;color:#000;transform:scaleX(1.0429);">10k</div>
<div class="t" style="left:800.20px;top:71.19px;font-size:11px;line-height:14px;color:#000;transform:scaleX(0.9742);">Plot Control</div>
<div class="t" style="left:806.60px;top:95.19px;font-size:11px;line-height:14px;color:#000;transform:scaleX(0.9814);">Frequency (X) Axis:</div>
<div class="t" style="left:825.80px;top:119.19px;font-size:11px;line-height:14px;color:#000;transform:scaleX(0.8684);">Min</div>
<div class="t" style="left:825.80px;top:147.19px;font-size:11px;line-height:14px;color:#000;transform:scaleX(0.9335);">Max</div>
<div class="t" style="left:881.10px;top:120.19px;font-size:11px;line-height:14px;color:#000;transform:scaleX(0.8000);">10</div>
<div class="t" style="left:879.50px;top:148.19px;font-size:11px;line-height:14px;color:#000;transform:scaleX(0.9283);">20000</div>
<div class="t" style="left:932.70px;top:119.19px;font-size:11px;line-height:14px;color:#000;transform:scaleX(0.8548);">Hz</div>
<div class="t" style="left:932.70px;top:147.19px;font-size:11px;line-height:14px;color:#000;transform:scaleX(0.8548);">Hz</div>
<div class="t" style="left:806.60px;top:175.19px;font-size:11px;line-height:14px;color:#000;transform:scaleX(0.9700);">Level (Y) Axis:</div>
<div class="t" style="left:825.80px;top:199.19px;font-size:11px;line-height:14px;color:#000;transform:scaleX(0.8684);">Min</div>
<div class="t" style="left:825.80px;top:227.19px;font-size:11px;line-height:14px;color:#000;transform:scaleX(0.9335);">Max</div>
<div class="t" style="left:882.20px;top:200.19px;font-size:11px;line-height:14px;color:#000;transform:scaleX(0.9619);">-20</div>
<div class="t" style="left:882.20px;top:228.19px;font-size:11px;line-height:14px;color:#000;transform:scaleX(0.8980);">20</div>
<div class="t" style="left:930.80px;top:199.19px;font-size:11px;line-height:14px;color:#000;transform:scaleX(0.8390);">dB</div>
<div class="t" style="left:930.80px;top:227.19px;font-size:11px;line-height:14px;color:#000;transform:scaleX(0.8390);">dB</div>
<div class="t" style="left:800.40px;top:280.19px;font-size:11px;line-height:14px;color:#000;transform:scaleX(0.9387);">EQ Curves</div>
<div class="t" style="left:800.40px;top:307.19px;font-size:11px;line-height:14px;color:#000;transform:scaleX(0.9731);">Target Response Curves</div>
<div class="t" style="left:800.40px;top:334.19px;font-size:11px;line-height:14px;color:#000;transform:scaleX(0.9623);">Actual Response Curves</div>
<div class="t" style="left:800.40px;top:361.19px;font-size:11px;line-height:14px;color:#000;transform:scaleX(0.9904);">Difference Curves</div>
<div class="t" style="left:18.70px;top:412.19px;font-size:11px;line-height:14px;color:#000;transform:scaleX(0.8290);">SYSTEM</div>
<div class="t" style="left:80.40px;top:411.19px;font-size:11px;line-height:14px;color:#000;transform:scaleX(0.8818);">SUBWOOFER</div>
<div class="t" style="left:168.60px;top:412.19px;font-size:11px;line-height:14px;color:#000;transform:scaleX(0.8251);">LEFT</div>
<div class="t" style="left:215.50px;top:412.19px;font-size:11px;line-height:14px;color:#000;transform:scaleX(0.8851);">RIGHT</div>
<div class="t" style="left:270.40px;top:412.19px;font-size:11px;line-height:14px;color:#000;transform:scaleX(0.8699);">BOX EQ</div>
<div class="t" style="left:47.50px;top:439.19px;font-size:11px;line-height:14px;color:#000;transform:scaleX(0.8550);">EQ</div>
<div class="t" style="left:97.45px;top:465.19px;font-size:11px;line-height:14px;color:#000;transform:scaleX(0.9587);">FilterType</div>
<div class="t" style="left:200.10px;top:465.19px;font-size:11px;line-height:14px;color:#000;transform:scaleX(0.9680);">Freq(Hz)</div>
<div class="t" style="left:297.95px;top:465.19px;font-size:11px;line-height:14px;color:#000;transform:scaleX(0.9665);">Level(dB)</div>
<div class="t" style="left:418.10px;top:465.19px;font-size:11px;line-height:14px;color:#000;transform:scaleX(0.9577);">Q</div>
<div class="t" style="left:511.05px;top:465.19px;font-size:11px;line-height:14px;color:#000;transform:scaleX(0.9891);">BW(oct)</div>
<div class="t" style="left:638.20px;top:439.19px;font-size:11px;line-height:14px;color:#000;transform:scaleX(0.9727);">Control</div>
<div class="t" style="left:638.20px;top:466.19px;font-size:11px;line-height:14px;color:#000;transform:scaleX(0.9573);">Level (dB)</div>
<div class="t" style="left:642.70px;top:497.19px;font-size:11px;line-height:14px;color:#000;transform:scaleX(0.9990);">0.00</div>
<div class="t" style="left:656.50px;top:521.19px;font-size:11px;line-height:14px;color:#000;transform:scaleX(0.9703);">User Adjustable?</div>
<div class="t" style="left:638.20px;top:549.19px;font-size:11px;line-height:14px;color:#000;transform:scaleX(0.9592);">Delay (ms)</div>
<div class="t" style="left:642.70px;top:579.19px;font-size:11px;line-height:14px;color:#000;transform:scaleX(0.9990);">0.02</div>
<div class="t" style="left:638.40px;top:608.19px;font-size:11px;line-height:14px;color:#000;transform:scaleX(0.9758);">Polarity</div>
<div class="t" style="left:684.50px;top:640.19px;font-size:11px;line-height:14px;color:#000;transform:scaleX(0.9308);">Normal</div>
<div class="t" style="left:874.55px;top:474.19px;font-size:11px;line-height:14px;color:#000;transform:scaleX(0.9358);">Mute ALL</div>
<div class="t" style="left:871.55px;top:504.19px;font-size:11px;line-height:14px;color:#000;transform:scaleX(0.9098);">Mute LEFT</div>
<div class="t" style="left:867.30px;top:534.19px;font-size:11px;line-height:14px;color:#000;transform:scaleX(0.9395);">Mute RIGHT</div>
<div class="t" style="left:873.30px;top:564.19px;font-size:11px;line-height:14px;color:#000;transform:scaleX(0.9174);">Mute SUB</div>
</body></html>
